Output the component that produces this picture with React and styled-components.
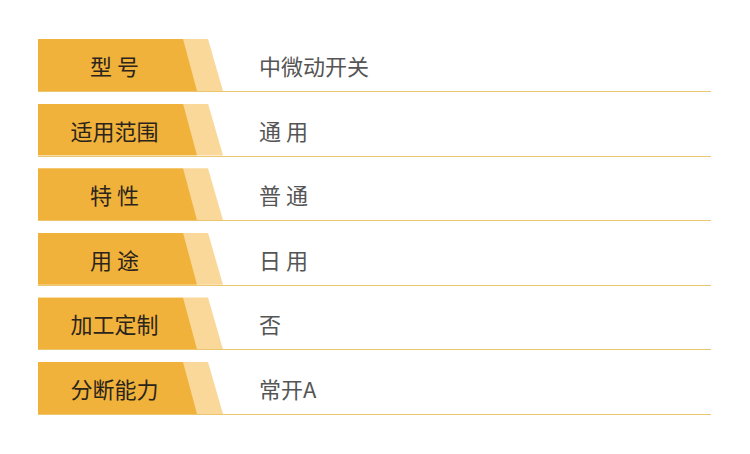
import React from "react";
import styled, { createGlobalStyle } from "styled-components";

const rows = [
  ["型 号", "中微动开关"],
  ["适用范围", "通 用"],
  ["特 性", "普 通"],
  ["用 途", "日 用"],
  ["加工定制", "否"],
  ["分断能力", "常开A"],
];

const App = () => {
  return (
    <>
      <GlobalStyle />
      <Table>
        {rows.map(([label, value]) => (
          <Row key={label}>
            <LabelWrap>
              <Label>{label}</Label>
            </LabelWrap>
            <Value>{value}</Value>
          </Row>
        ))}
      </Table>
    </>
  );
};

const GlobalStyle = createGlobalStyle`
  body {
    margin: 0;
    background: #ffffff;
    font-family: "Noto Sans CJK SC", "Noto Sans", sans-serif;
  }
`;

const Table = styled.div`
  display: flex;
  flex-direction: column;
  gap: 11.6px;
  width: 673px;
  padding: 39px 0 0 38px;
`;

const Row = styled.div`
  display: flex;
  align-items: center;
  height: 52px;
  border-bottom: 1px solid #e9c66f;
`;

const LabelWrap = styled.div`
  width: 185px;
  height: 100%;
  flex-shrink: 0;
  background: #f9d899;
  clip-path: polygon(0 0, 170px 0, 185px 100%, 0 100%);
`;

const Label = styled.div`
  display: flex;
  align-items: center;
  justify-content: center;
  width: 159px;
  height: 100%;
  padding-right: 6px;
  box-sizing: border-box;
  background: #f0b23a;
  clip-path: polygon(0 0, 145px 0, 159px 100%, 0 100%);
  font-size: 22px;
  font-weight: 400;
  color: #2b241c;
  white-space: pre;
`;

const Value = styled.div`
  margin-left: 36px;
  font-size: 22px;
  color: #555555;
  white-space: pre;
`;

export default App;
